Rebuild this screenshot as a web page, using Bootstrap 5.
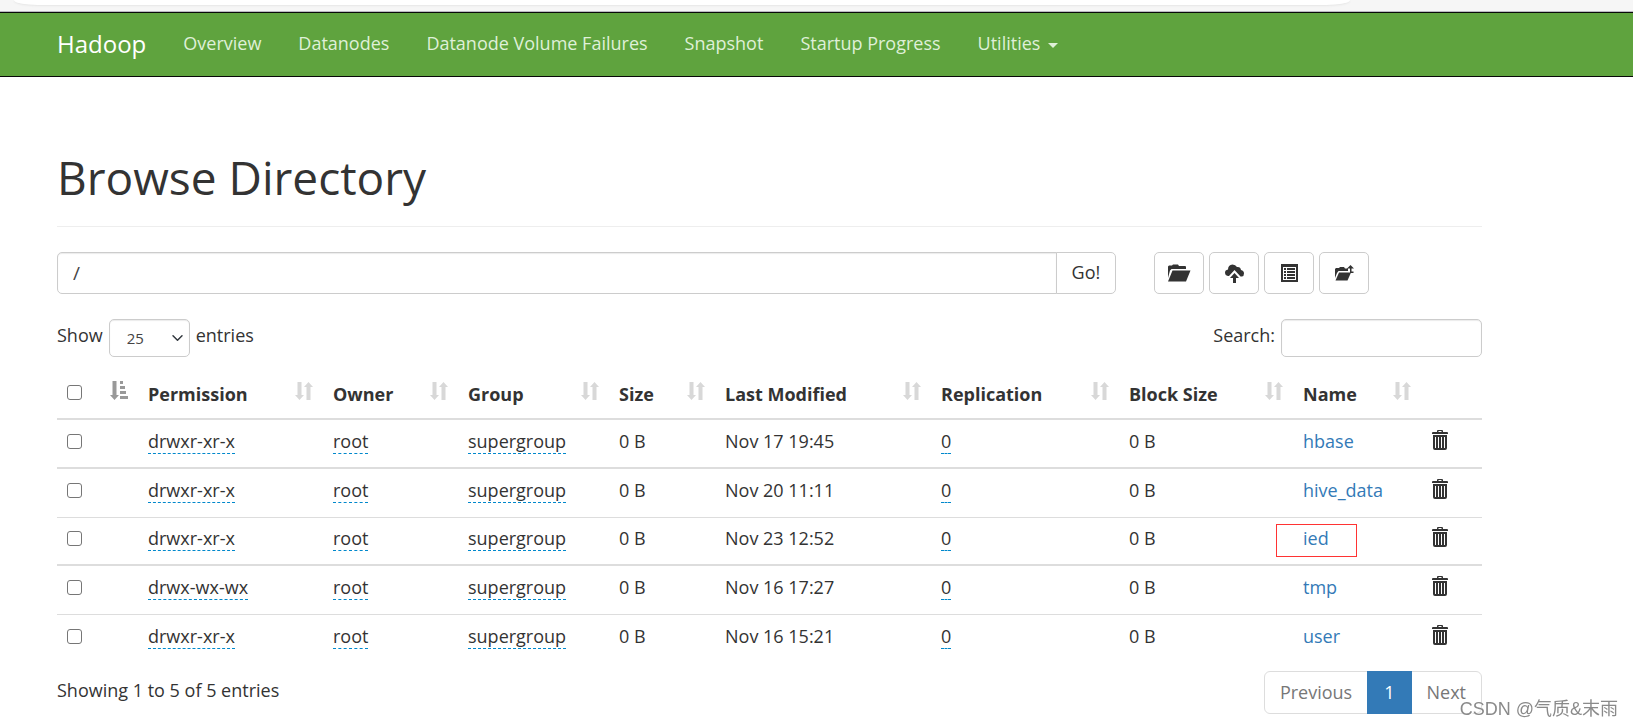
<!DOCTYPE html>
<html lang="en">
<head>
<meta charset="utf-8">
<meta name="viewport" content="width=device-width, initial-scale=1">
<title>Browsing HDFS</title>
<link href="https://cdn.jsdelivr.net/npm/bootstrap@5.3.0/dist/css/bootstrap.min.css" rel="stylesheet">
<style>
  body { font-family: "Open Sans", "Noto Sans CJK SC", sans-serif; font-size: 18px; line-height: 25px; color: #333; }
  .browser-edge { height: 12px; background: #f6f6f6; border-bottom: 1px solid #b9b9c0; padding-left: 14px; padding-right: 283px; }
  .browser-edge div { height: 5px; background: #fff; border-radius: 0 0 24px 24px / 0 0 5px 5px; box-shadow: 0 1px 2px #e6e6e6; }
  .page-wrap { padding-left: 57px; padding-right: 151px; }
  .topbar { background: #5fa33e; border-top: 1px solid #080808; border-bottom: 1px solid #080808; height: 65px; padding-top: 0; padding-bottom: 0; }
  .topbar .page-wrap { justify-content: flex-start; }
  .topbar .navbar-brand { color: #fff; font-size: 24px; line-height: 30px; margin-right: 18px; padding: 0 0 2px; }
  .topbar .navbar-nav .nav-link { color: #dff0d8; padding: 0 18px 2px 19px; }
  .topbar .dropdown-toggle::after { border-width: 5px 5px 0; margin-left: 8px; vertical-align: 2px; }
  h1 { font-size: 46px; line-height: 56px; font-weight: 400; margin: 0; padding: 72px 0 21px; border-bottom: 1px solid #eee; }
  .control-row { --bs-gutter-x: 38px; margin-top: 25px; }
  .form-control, .form-select { border-color: #ccc; box-shadow: inset 0 1px 1px rgba(0,0,0,.08); color: #444; border-radius: 5px; }
  .path-box { height: 42px; font-size: 19px; padding: 6px 15px; }
  .btn-plain { background: #fff; border: 1px solid #ccc; color: #333; height: 42px; font-size: 18px; line-height: 25px; border-radius: 5px; padding: 0 15px 2px; }
  .btn-tool { width: 50px; padding: 0; display: flex; align-items: center; justify-content: center; }
  .tool-list { gap: 5px; }
  .list-bar { margin-top: 25px; height: 38px; gap: 6px; }
  .list-bar label { padding-bottom: 6px; }
  .page-length { width: 81px; height: 38px; font-size: 15px; padding: 2px 17px; background-size: 15px 12px; background-position: right 4px center; }
  .search-box { width: 201px; height: 38px; }
  .file-table { table-layout: fixed; margin: 13px 0 0; color: #333; }
  .file-table > :not(caption) > * > * { padding: 0 10px; border: 0 solid #ddd; vertical-align: middle; }
  .file-table > thead > tr > th { height: 49px; font-weight: 700; white-space: nowrap; }
  .file-table > tbody > tr > td { border-top-width: 2px; height: 49px; padding-bottom: 4px; white-space: nowrap; }
  .file-table > tbody > tr.thin > td { border-top-width: 1px; height: 48px; }
  .sort-icon { width: 18px; height: 20px; fill: #d8d8d8; flex: none; margin-bottom: 6px; }
  .sort-icon.on { fill: #999; }
  .tick { display: block; width: 15px; height: 15px; margin: 0; appearance: none; border: 1px solid #767676; border-radius: 3px; background: #fff; }
  .file-table th .tick { margin-bottom: 4px; }
  .editable { border-bottom: 1px dashed #08c; display: inline-block; line-height: 24px; }
  .file-table a, .file-table a:hover { color: #337ab7; text-decoration: none; }
  .btn-trash { border: 0; background: none; padding: 0 0 3px 1px; display: block; color: #333; }
  .marked { position: relative; }
  .marked::before { content: ""; position: absolute; left: -17px; top: 6px; width: 81px; height: 33px; border: 1px solid #f33; pointer-events: none; }
  .foot-bar { margin-top: 9px; }
  .foot-bar .info { padding-top: 7px; }
  .pagination { margin: 0; }
  .pagination .page-link { font-size: 18px; color: #777; border-color: #ddd; padding: 8px 15px; line-height: 25px; background: #fff; }
  .pagination .active .page-link { color: #fff; background: #337ab7; border-color: #337ab7; padding: 8px 16px; }
  .stamp { position: fixed; right: 15px; bottom: 6px; font-family: "Liberation Sans", "Noto Sans CJK SC", sans-serif; font-size: 18px; line-height: 24px; color: #8a8a8a; text-shadow: 0 0 1px #fff, 1px 1px 0 #fff; }
</style>
</head>
<body>
<svg class="d-none">
  <symbol id="sort" viewBox="0 0 18 20"><path d="M2.500 1h4v13H9l-4.500 5L0 14h2.500zM11.500 19h4V6H18l-4.500-5L9 6h2.500z"/></symbol>
  <symbol id="sort-on" viewBox="0 0 18 20"><path d="M2.500 0h4v14H9l-4.500 5L0 14h2.500zM10 0h3v3h-3zM10 5h5v3h-5zM10 10h6v3h-6zM10 15h8v3h-8z"/></symbol>
  <symbol id="trash" viewBox="0 0 16 20"><path fill="currentColor" fill-rule="evenodd" d="M5 2V1q0-1 1-1h4q1 0 1 1v1h4q1 0 1 1v1H0V3q0-1 1-1zm1.500 0h3V1h-3zM1 5h14v13q0 2-2 2H3q-2 0-2-2zm2 2v11h1V7zm3 0v11h1V7zm3 0v11h1V7zm3 0v11h1V7z"/></symbol>
</svg>

<div class="browser-edge"><div></div></div>

<nav class="navbar navbar-expand topbar">
  <div class="container-fluid page-wrap">
    <a class="navbar-brand" href="#">Hadoop</a>
    <ul class="navbar-nav">
      <li class="nav-item"><a class="nav-link" href="#">Overview</a></li>
      <li class="nav-item"><a class="nav-link" href="#">Datanodes</a></li>
      <li class="nav-item"><a class="nav-link" href="#">Datanode Volume Failures</a></li>
      <li class="nav-item"><a class="nav-link" href="#">Snapshot</a></li>
      <li class="nav-item"><a class="nav-link" href="#">Startup Progress</a></li>
      <li class="nav-item dropdown"><a class="nav-link dropdown-toggle" href="#" data-bs-toggle="dropdown">Utilities</a></li>
    </ul>
  </div>
</nav>

<main class="container-fluid page-wrap">
  <h1>Browse Directory</h1>

  <div class="row control-row">
    <div class="col-9">
      <div class="input-group">
        <input type="text" class="form-control path-box" value="/" aria-label="Directory">
        <button class="btn btn-plain" type="button">Go!</button>
      </div>
    </div>
    <div class="col-3 d-flex tool-list">
      <button class="btn btn-plain btn-tool" type="button" aria-label="Create directory">
        <svg width="24" height="18" viewBox="0 0 24 18" fill="#333"><path d="M1 14V2.500L2 1.500h3L6 .5h5l1 1.500h6q1 0 1 1v2H4.500L3 6.500zM5.500 6.500h18L19 17.500H1z"/></svg>
      </button>
      <button class="btn btn-plain btn-tool" type="button" aria-label="Upload files">
        <svg width="19" height="19" viewBox="0 0 19 19" fill="#333"><path d="M3 12Q0 11.500 0 8.500 0 6 3 5.500 3 1 7.500.5q3 0 4.500 2.500 3.500-.5 4 3 3 .5 3 3.500 0 2.500-2 3h-1.500L9.500 6 4 12zM9.500 9l4.500 5h-3v5H8v-5H5z"/></svg>
      </button>
      <button class="btn btn-plain btn-tool" type="button" aria-label="Cut and paste">
        <svg width="17" height="18" viewBox="0 0 17 18"><path fill="#333" fill-rule="evenodd" d="M0 0h17v18H0zM2 3v13h13V3zM3 4h2v2H3zm3 0h8v2H6zM3 7h2v2H3zm3 0h8v2H6zM3 10h2v2H3zm3 0h8v2H6zM3 13h2v2H3zm3 0h8v2H6z"/></svg>
      </button>
      <button class="btn btn-plain btn-tool" type="button" aria-label="Parent directory">
        <svg width="19" height="16" viewBox="0 0 19 16" fill="#333"><path d="M0 13V4l1-1h3l1-1h4l1 1.500h3V6H3.500L2 8zM4 7.500h12L12.500 15.500H.5zM15.500 0L19 3.500h-2.500v3h2V8H15V3.500h-3z"/></svg>
      </button>
    </div>
  </div>

  <div class="d-flex align-items-center list-bar">
    <label for="length">Show</label>
    <select id="length" class="form-select page-length"><option>25</option></select>
    <label for="length">entries</label>
    <label for="search" class="ms-auto">Search:</label>
    <input type="search" id="search" class="form-control search-box">
  </div>

  <table class="table file-table">
    <colgroup>
      <col width="81"><col width="185"><col width="135"><col width="151"><col width="106"><col width="216"><col width="188"><col width="174"><col width="128"><col width="61">
    </colgroup>
    <thead>
      <tr>
        <th><div class="d-flex justify-content-between align-items-center"><input type="checkbox" class="tick" aria-label="Select all"><svg class="sort-icon on"><use href="#sort-on"/></svg></div></th>
        <th><div class="d-flex justify-content-between align-items-center">Permission<svg class="sort-icon"><use href="#sort"/></svg></div></th>
        <th><div class="d-flex justify-content-between align-items-center">Owner<svg class="sort-icon"><use href="#sort"/></svg></div></th>
        <th><div class="d-flex justify-content-between align-items-center">Group<svg class="sort-icon"><use href="#sort"/></svg></div></th>
        <th><div class="d-flex justify-content-between align-items-center">Size<svg class="sort-icon"><use href="#sort"/></svg></div></th>
        <th><div class="d-flex justify-content-between align-items-center">Last Modified<svg class="sort-icon"><use href="#sort"/></svg></div></th>
        <th><div class="d-flex justify-content-between align-items-center">Replication<svg class="sort-icon"><use href="#sort"/></svg></div></th>
        <th><div class="d-flex justify-content-between align-items-center">Block Size<svg class="sort-icon"><use href="#sort"/></svg></div></th>
        <th><div class="d-flex justify-content-between align-items-center">Name<svg class="sort-icon"><use href="#sort"/></svg></div></th>
        <th></th>
      </tr>
    </thead>
    <tbody>
      <tr>
        <td><input type="checkbox" class="tick" aria-label="Select hbase"></td>
        <td><span class="editable">drwxr-xr-x</span></td><td><span class="editable">root</span></td><td><span class="editable">supergroup</span></td>
        <td>0 B</td><td>Nov 17 19:45</td><td><span class="editable">0</span></td><td>0 B</td><td><a href="#">hbase</a></td>
        <td><button type="button" class="btn-trash" aria-label="Delete hbase"><svg class="d-block" width="16" height="20"><use href="#trash"/></svg></button></td>
      </tr>
      <tr>
        <td><input type="checkbox" class="tick" aria-label="Select hive_data"></td>
        <td><span class="editable">drwxr-xr-x</span></td><td><span class="editable">root</span></td><td><span class="editable">supergroup</span></td>
        <td>0 B</td><td>Nov 20 11:11</td><td><span class="editable">0</span></td><td>0 B</td><td><a href="#">hive_data</a></td>
        <td><button type="button" class="btn-trash" aria-label="Delete hive_data"><svg class="d-block" width="16" height="20"><use href="#trash"/></svg></button></td>
      </tr>
      <tr class="thin">
        <td><input type="checkbox" class="tick" aria-label="Select ied"></td>
        <td><span class="editable">drwxr-xr-x</span></td><td><span class="editable">root</span></td><td><span class="editable">supergroup</span></td>
        <td>0 B</td><td>Nov 23 12:52</td><td><span class="editable">0</span></td><td>0 B</td><td class="marked"><a href="#">ied</a></td>
        <td><button type="button" class="btn-trash" aria-label="Delete ied"><svg class="d-block" width="16" height="20"><use href="#trash"/></svg></button></td>
      </tr>
      <tr>
        <td><input type="checkbox" class="tick" aria-label="Select tmp"></td>
        <td><span class="editable">drwx-wx-wx</span></td><td><span class="editable">root</span></td><td><span class="editable">supergroup</span></td>
        <td>0 B</td><td>Nov 16 17:27</td><td><span class="editable">0</span></td><td>0 B</td><td><a href="#">tmp</a></td>
        <td><button type="button" class="btn-trash" aria-label="Delete tmp"><svg class="d-block" width="16" height="20"><use href="#trash"/></svg></button></td>
      </tr>
      <tr class="thin">
        <td><input type="checkbox" class="tick" aria-label="Select user"></td>
        <td><span class="editable">drwxr-xr-x</span></td><td><span class="editable">root</span></td><td><span class="editable">supergroup</span></td>
        <td>0 B</td><td>Nov 16 15:21</td><td><span class="editable">0</span></td><td>0 B</td><td><a href="#">user</a></td>
        <td><button type="button" class="btn-trash" aria-label="Delete user"><svg class="d-block" width="16" height="20"><use href="#trash"/></svg></button></td>
      </tr>
    </tbody>
  </table>

  <div class="d-flex justify-content-between foot-bar">
    <div class="info">Showing 1 to 5 of 5 entries</div>
    <ul class="pagination">
      <li class="page-item"><a class="page-link" href="#">Previous</a></li>
      <li class="page-item active"><a class="page-link" href="#">1</a></li>
      <li class="page-item"><a class="page-link" href="#">Next</a></li>
    </ul>
  </div>
</main>
<div class="stamp">CSDN @气质&amp;末雨</div>
<script src="https://cdn.jsdelivr.net/npm/bootstrap@5.3.0/dist/js/bootstrap.bundle.min.js"></script>
</body>
</html>
